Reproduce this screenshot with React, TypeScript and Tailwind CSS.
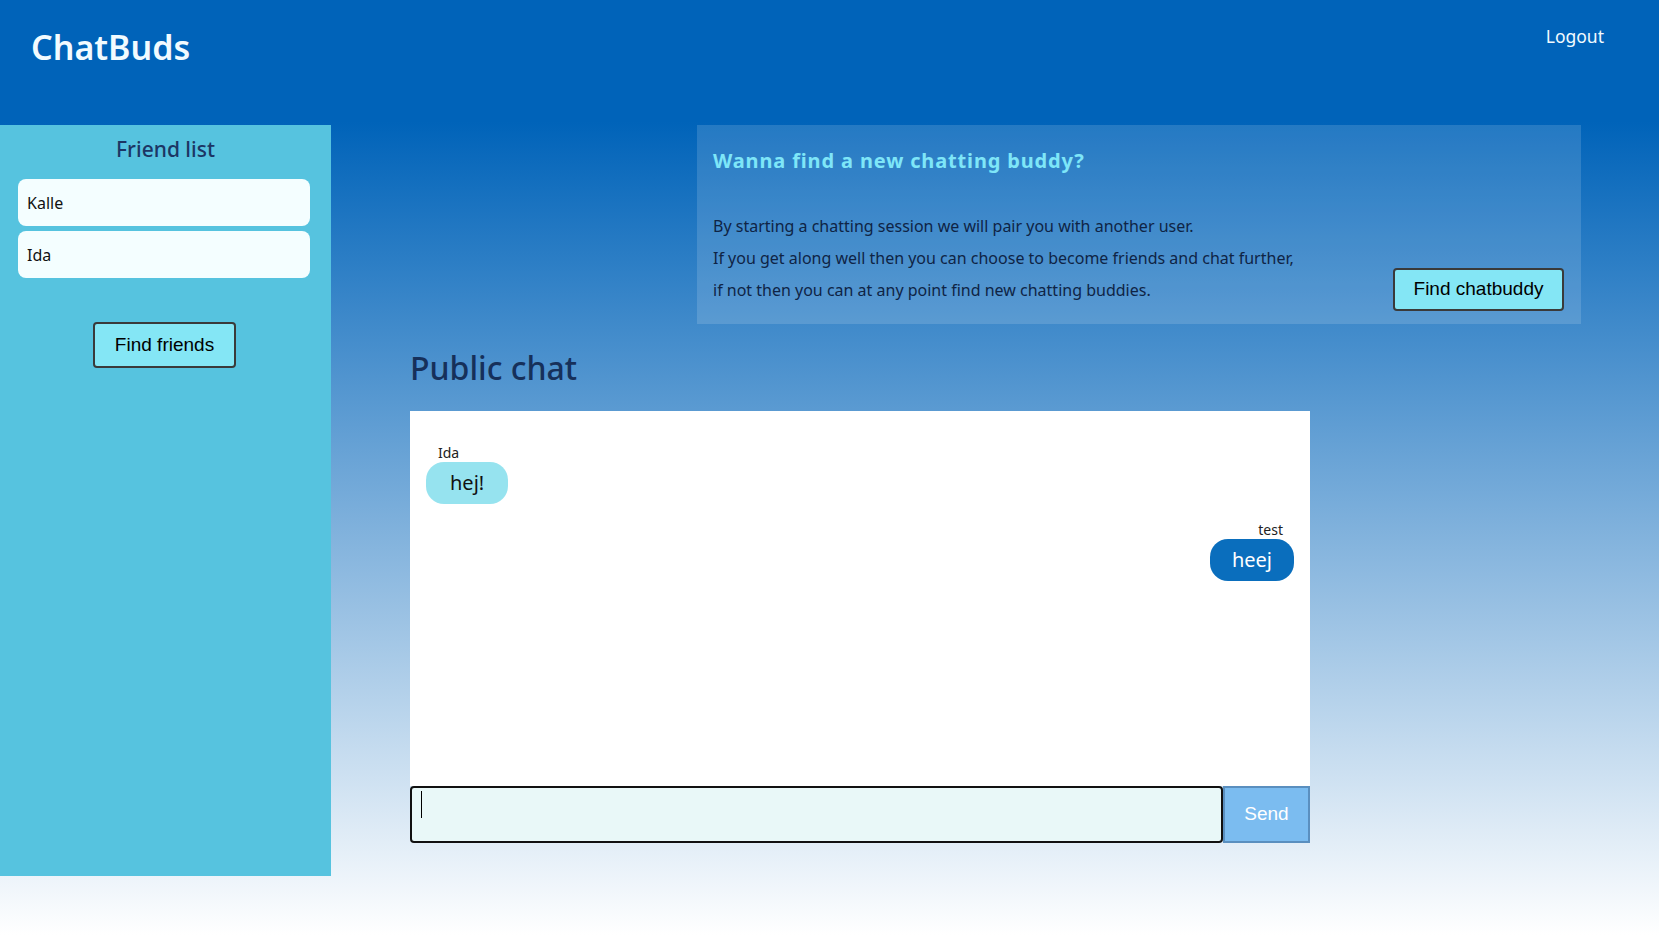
import { useState } from "react";

const friends = ["Kalle", "Ida"];

const messages = [
  { id: 1, user: "Ida", text: "hej!", mine: false },
  { id: 2, user: "test", text: "heej", mine: true },
];

const App = () => {
  const [draft, setDraft] = useState("");

  return (
    <div className="min-h-screen w-full bg-linear-to-b/srgb from-[#0063b9] from-13% to-white font-['Noto_Sans',sans-serif]">
      {/* header */}
      <div className="flex h-[125px] items-start justify-between">
        <h1 className="ml-[31px] mt-[23px] text-[34px] font-semibold leading-[48px] text-[#f2fbff]">ChatBuds</h1>
        <button className="mr-[55px] mt-[23px] text-[17.5px] leading-[26px] text-[#f2fbff]">Logout</button>
      </div>

      <div className="flex">
        {/* friend list */}
        <div className="flex h-[751px] w-[331px] shrink-0 flex-col bg-[#56c3df] pt-[10px]">
          <h2 className="text-center text-[21px] font-medium leading-[28px] text-[#1c3664]">Friend list</h2>
          <div className="mt-[16px] flex flex-col gap-[5px] pl-[18px]">
            {friends.map((f) => (
              <div key={f} className="flex h-[47px] w-[292px] items-center rounded-[8px] bg-[#f4feff] pl-[9px] text-[16px] text-[#111]">
                {f}
              </div>
            ))}
          </div>
          <button className="mx-auto mt-[44px] h-[46px] w-[143px] -translate-x-px rounded-[4px] border-2 border-[#3a3a3a] bg-[#84e6f5] font-['Liberation_Sans',Arial,sans-serif] text-[19px] text-black">
            Find friends
          </button>
        </div>

        {/* main */}
        <div className="flex flex-1 flex-col">
          <div className="mr-[78px] flex h-[199px] w-[884px] self-end bg-white/[0.14] pb-[13px] pl-4 pr-[17px] pt-[21px]">
            <div className="flex-1">
              <h3 className="mt-px text-[20px] font-bold leading-[28px] tracking-[0.85px] text-[#7ee6f8]">Wanna find a new chatting buddy?</h3>
              <div className="mt-[35px] text-[16px] leading-[32px] text-[#0f2445]">
                <p>By starting a chatting session we will pair you with another user.</p>
                <p>If you get along well then you can choose to become friends and chat further,</p>
                <p>if not then you can at any point find new chatting buddies.</p>
              </div>
            </div>
            <button className="h-[43px] w-[171px] self-end rounded-[4px] border-2 border-[#3a3a3a] bg-[#84e6f5] font-['Liberation_Sans',Arial,sans-serif] text-[19px] text-black">
              Find chatbuddy
            </button>
          </div>

          <div className="ml-[79px] w-[900px]">
            <h2 className="mt-[22px] text-[32px] font-medium leading-[44px] text-[#16305a]">Public chat</h2>
            <div className="mt-[21px] flex h-[375px] flex-col bg-white px-4 pt-[32px]">
              {messages.map((m) => (
                <div key={m.id} className={m.mine ? "mb-[16px] flex flex-col items-end" : "mb-[16px] flex flex-col items-start"}>
                  <span className={m.mine ? "mr-[11px] text-[14px] leading-[19px] text-[#222]" : "ml-[12px] text-[14px] leading-[19px] text-[#222]"}>
                    {m.user}
                  </span>
                  <div
                    className={
                      m.mine
                        ? "flex h-[42px] items-center rounded-[18px] bg-[#0a6ebd] px-[22px] text-[20px] text-white"
                        : "flex h-[42px] items-center rounded-[18px] bg-[#96e3ef] px-[24px] text-[20px] text-[#111]"
                    }
                  >
                    {m.text}
                  </div>
                </div>
              ))}
            </div>
            <div className="flex h-[57px]">
              <div className="relative h-full flex-1">
                <textarea
                  autoFocus
                  value={draft}
                  onChange={(e) => setDraft(e.target.value)}
                  className="h-full w-full resize-none rounded-[4px] border-2 border-[#111] bg-[#e9f8f8] px-[10px] py-[3px] text-[20px] caret-transparent outline-none"
                />
                {draft === "" && <span className="pointer-events-none absolute left-[11px] top-[5px] h-[27px] w-px bg-black" />}
              </div>
              <button className="h-full w-[87px] border-2 border-[#5a8fbf] bg-[#7bbcf0] font-['Liberation_Sans',Arial,sans-serif] text-[19px] text-white">
                Send
              </button>
            </div>
          </div>
        </div>
      </div>
    </div>
  );
};

export default App;
